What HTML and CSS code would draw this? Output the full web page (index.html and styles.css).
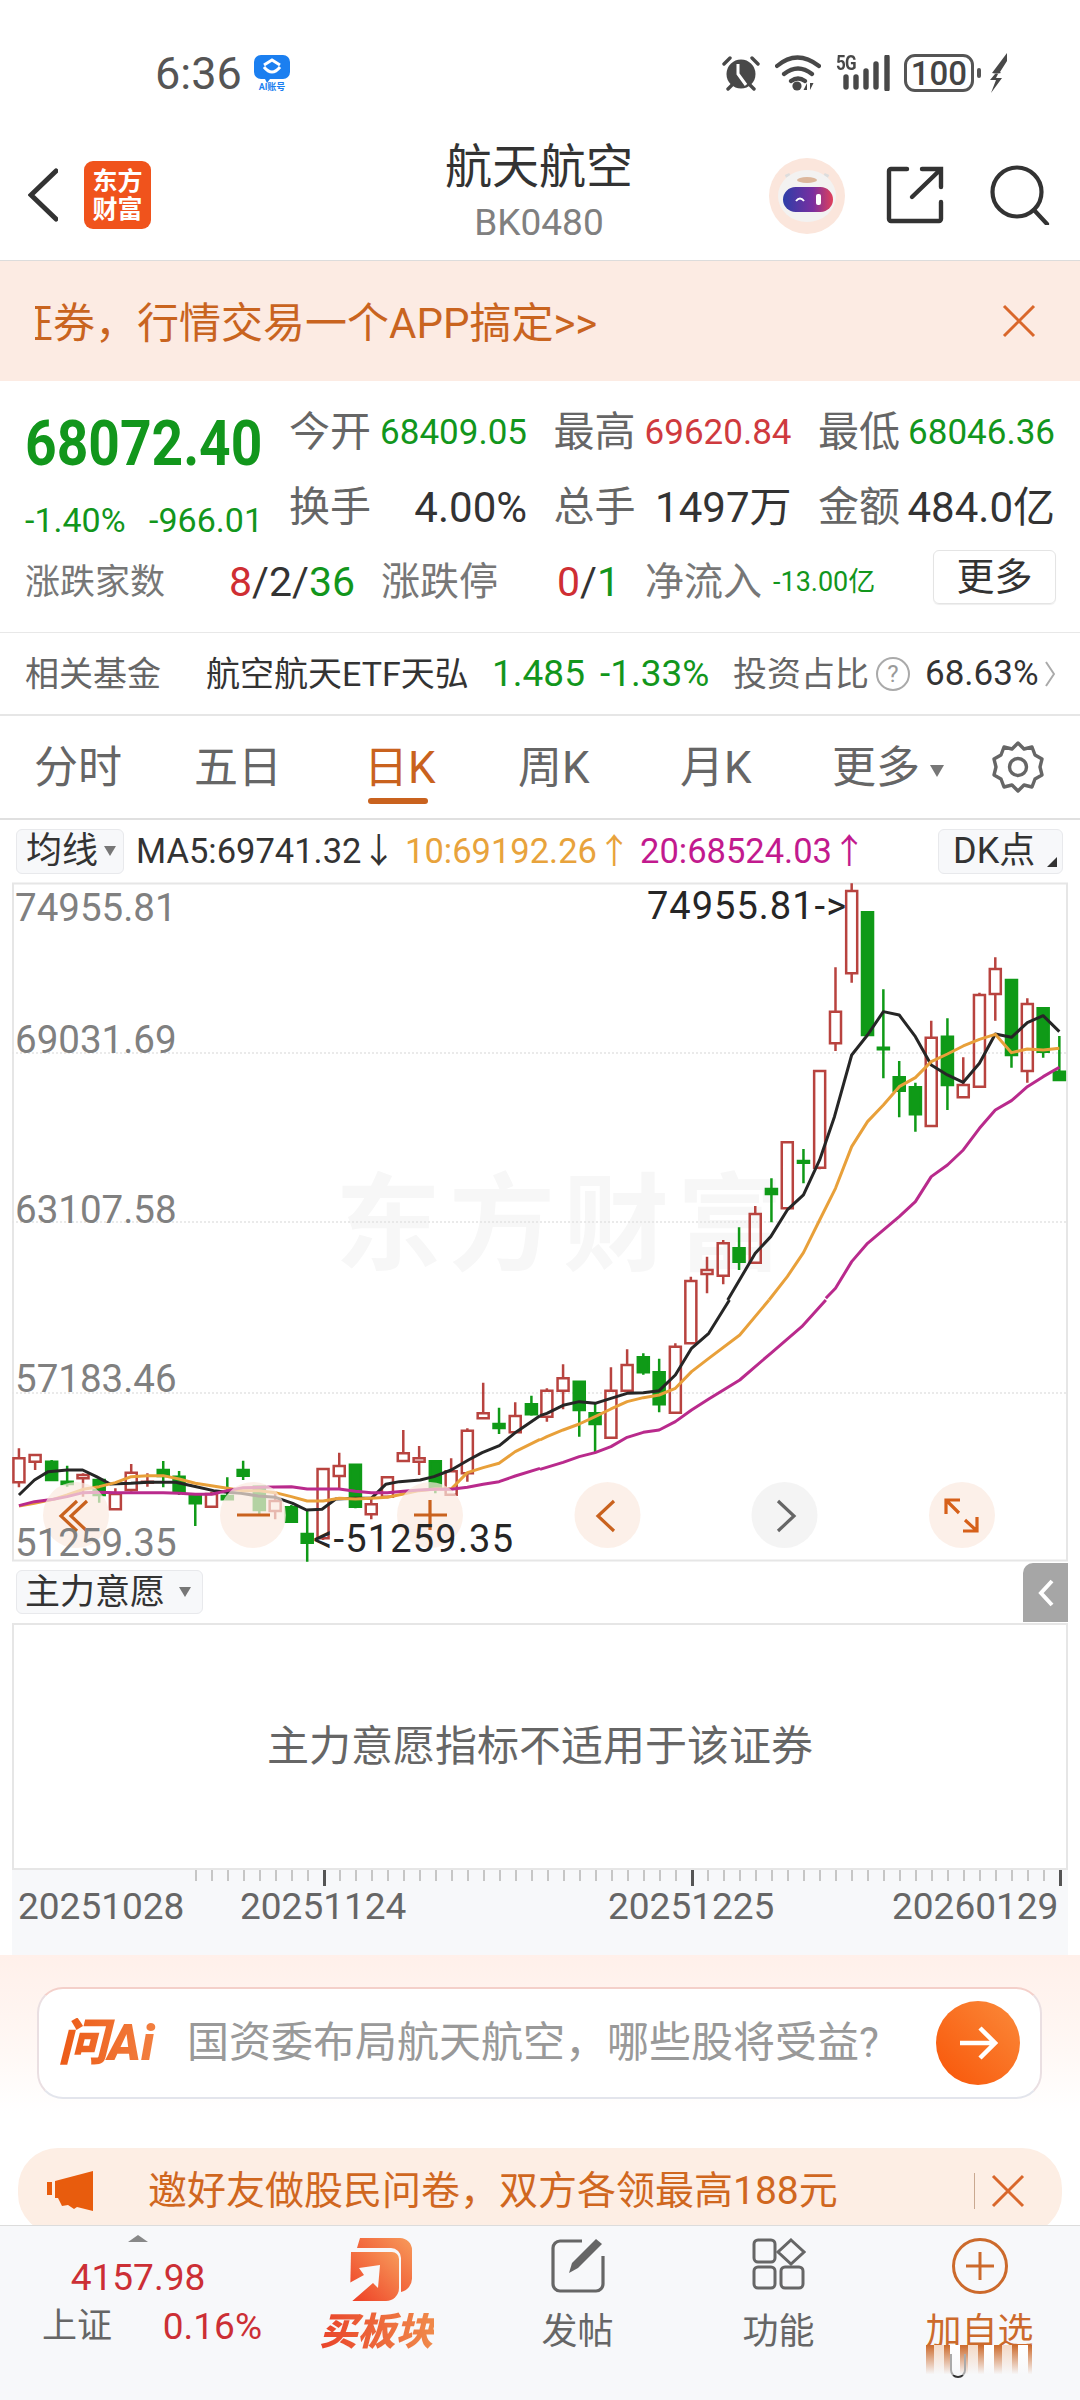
FILE: index.html
```html
<!DOCTYPE html>
<html lang="zh">
<head>
<meta charset="utf-8">
<title>航天航空</title>
<link rel="stylesheet" href="styles.css">
</head>
<body>
<div class="page">
  <header class="status">
    <span class="clock">6:36</span>
    <span class="app-badge">
      <svg width="36" height="28" viewBox="0 0 36 28"><path d="M7 0H29a7 7 0 0 1 7 7V17a7 7 0 0 1-7 7H16l-3 4-2-4H7a7 7 0 0 1-7-7V7a7 7 0 0 1 7-7z" fill="#1b7ff0"/><path d="M10 10l8-5 8 5" fill="none" stroke="#fff" stroke-width="3"/><path d="M10 12q8 10 16 0" fill="none" stroke="#fff" stroke-width="3"/></svg>
      <span class="app-badge-text">AI账号</span>
    </span>
    <span class="status-icons">
      <svg class="ic-alarm" width="38" height="36" viewBox="0 0 38 36"><circle cx="19" cy="19" r="14.5" fill="#484848"/><path d="M2 9l6-6M36 9l-6-6M6 34l4-4M32 34l-4-4" stroke="#484848" stroke-width="3.4" stroke-linecap="round"/><path d="M16 9v10l8 11" stroke="#fff" stroke-width="3" fill="none"/></svg>
      <svg class="ic-wifi" width="46" height="36" viewBox="0 0 46 36"><path d="M2 11q20-17 42 0M9 19q14-11 28 0M16 26q7-5 14 0" fill="none" stroke="#484848" stroke-width="4.2" stroke-linecap="round"/><circle cx="22" cy="31" r="4.6" fill="#484848"/><path d="M32 35v-7l-3.500 7zM35 28v7l3.500-7z" fill="#484848"/></svg>
      <span class="ic-signal">
        <span class="five-g">5G</span>
        <svg width="48" height="36" viewBox="0 0 48 36"><path d="M3 22v10M13 22v10M23 16v16M33 9v23M44 2v32" stroke="#484848" stroke-width="5.400" stroke-linecap="round"/></svg>
      </span>
      <span class="battery">100</span>
      <span class="battery-tip"></span>
      <svg class="ic-bolt" width="18" height="40" viewBox="0 0 18 40"><path d="M17 0L2 20l6 1-2 4 6 0L1 40 6 27l-6 0 5-6 6-1-1-1 7-11z" fill="#484848"/></svg>
    </span>
  </header>

  <nav class="nav">
    <div class="nav-left">
      <svg width="30" height="54" viewBox="0 0 30 54"><path d="M28 3L3 27l25 24" fill="none" stroke="#333" stroke-width="5" stroke-linecap="round"/></svg>
      <div class="logo"><span>东方</span><span>财富</span></div>
    </div>
    <div class="nav-title">
      <div class="title">航天航空</div>
      <div class="code">BK0480</div>
    </div>
    <div class="nav-right">
      <svg class="avatar" width="76" height="76" viewBox="0 0 76 76"><defs><linearGradient id="visor" x1="0" x2="1"><stop offset="0" stop-color="#2c3ea8"/><stop offset=".6" stop-color="#7a2fa0"/><stop offset="1" stop-color="#e0405a"/></linearGradient></defs><circle cx="38" cy="38" r="38" fill="#fbe6dc"/><path d="M18 16l4 8M58 16l-4 8" stroke="#ddd" stroke-width="5"/><ellipse cx="38" cy="38" rx="29" ry="26" fill="#f3f2f1"/><ellipse cx="38" cy="22" rx="10" ry="3" fill="#dcb79c"/><rect x="14" y="29" width="50" height="25" rx="12.500" fill="url(#visor)"/><path d="M27 43q4-5 8 0" stroke="#fff" stroke-width="2" fill="none"/><rect x="47" y="36" width="5" height="11" rx="2" fill="#fff"/></svg>
      <svg class="ic-share" width="58" height="58" viewBox="0 0 58 58"><path d="M21 3H5a2 2 0 0 0-2 2V53a2 2 0 0 0 2 2H53a2 2 0 0 0 2-2V36M36 3H55V21M54 4L26 31" fill="none" stroke="#333" stroke-width="4.400" stroke-linecap="round"/></svg>
      <svg class="ic-search" width="60" height="60" viewBox="0 0 60 60"><circle cx="27" cy="27" r="24.500" fill="none" stroke="#333" stroke-width="4.200"/><path d="M44 45l13 14" stroke="#333" stroke-width="4.200" stroke-linecap="round"/></svg>
    </div>
  </nav>

  <section class="promo">
    <div class="promo-clip"><span class="promo-text">证券，行情交易一个APP搞定&gt;&gt;</span></div>
    <svg width="34" height="34" viewBox="0 0 34 34"><path d="M2 2l30 30M32 2L2 32" stroke="#d9672b" stroke-width="3"/></svg>
  </section>

  <section class="stats">
    <div class="stats-top">
      <div class="quote">
        <div class="price">68072.40</div>
        <div class="chg"><span>-1.40%</span><span>-966.01</span></div>
      </div>
      <div class="stat-grid">
        <div class="stat"><span class="lbl">今开</span><span class="val up-g">68409.05</span></div>
        <div class="stat"><span class="lbl">最高</span><span class="val up-r">69620.84</span></div>
        <div class="stat"><span class="lbl">最低</span><span class="val up-g">68046.36</span></div>
        <div class="stat"><span class="lbl">换手</span><span class="val2">4.00%</span></div>
        <div class="stat"><span class="lbl">总手</span><span class="val2">1497万</span></div>
        <div class="stat"><span class="lbl">金额</span><span class="val2">484.0亿</span></div>
      </div>
    </div>
    <div class="stats-row3">
      <span class="lbl3 lbl3-sm">涨跌家数</span>
      <span class="mix"><span class="red">8</span>/2/<span class="green">36</span></span>
      <span class="lbl3">涨跌停</span>
      <span class="mix"><span class="red">0</span>/<span class="green">1</span></span>
      <span class="lbl3">净流入</span>
      <span class="inflow">-13.00亿</span>
      <span class="more-btn">更多</span>
    </div>
  </section>

  <section class="fund">
    <span class="fund-lbl">相关基金</span>
    <span class="fund-name">航空航天ETF天弘</span>
    <span class="fund-num">1.485</span>
    <span class="fund-num">-1.33%</span>
    <span class="fund-lbl">投资占比</span>
    <span class="help">?</span>
    <span class="fund-pct">68.63%</span>
    <svg width="10" height="28" viewBox="0 0 10 28"><path d="M1 2l8 12-8 12" fill="none" stroke="#aaa" stroke-width="2"/></svg>
  </section>

  <section class="tabs">
    <span class="tab">分时</span>
    <span class="tab">五日</span>
    <span class="tab tab-active">日K</span>
    <span class="tab">周K</span>
    <span class="tab">月K</span>
    <span class="tab">更多<i class="caret"></i></span>
    <svg width="52" height="54" viewBox="0 0 52 54"><path d="M26 3l6 6 8-2 3 8 7 4-2 8 2 8-7 4-3 8-8-2-6 6-6-6-8 2-3-8-7-4 2-8-2-8 7-4 3-8 8 2z" fill="none" stroke="#666" stroke-width="3.400" stroke-linejoin="round"/><circle cx="26" cy="27" r="8.500" fill="none" stroke="#666" stroke-width="3.400"/></svg>
  </section>

  <section class="legend">
    <span class="pill pill-ma">均线<i class="caret caret-sm"></i></span>
    <span class="ma ma5">MA5:69741.32↓</span>
    <span class="ma ma10">10:69192.26↑</span>
    <span class="ma ma20">20:68524.03↑</span>
    <span class="pill pill-dk">DK点<i class="corner"></i></span>
  </section>

  <section class="chart">
    <svg class="chart-svg" width="1080" height="679" viewBox="0 882 1080 679">
      <rect x="13" y="883.500" width="1054" height="677" fill="#fff" stroke="#e6e6e6" stroke-width="2"/>
      <text class="watermark" x="335" y="1262">东方财富</text>
      <path d="M12 1053H1068M12 1222H1068M12 1393H1068" stroke="#e4e4e4" stroke-width="1.500" stroke-dasharray="2 2"/>

      <g transform="translate(0 1300) scale(.3444 .3333)">
        <path class="c-red" d="M55 445V475M39 475h32v72h-32zM55 547V562M102 463V465M86 465h32v20h-32zM102 485V510M241 520V525M225 525h32v10h-32zM241 535V590M335 565V582M319 582h32v46h-32zM381 492V518M365 518h32v52h-32zM381 570V575M428 520V545M412 545h32v3h-32zM428 548V560M614 575V582M598 582h32v38h-32zM799 580V603M783 603h32v30h-32zM799 633V658M938 505V507M922 507h32v208h-32zM938 715V720M985 458V498M969 498h32v30h-32zM985 528V565M1078 598V613M1062 613h32v30h-32zM1078 643V658M1125 530V532M1109 532h32v58h-32zM1125 590V595M1171 390V460M1155 460h32v23h-32zM1217 438V475M1201 475h32v10h-32zM1217 485V525M1310 475V514M1294 514h32v70h-32zM1357 385V392M1341 392h32v128h-32zM1357 520V545M1403 248V340M1387 340h32v15h-32zM1496 307V348M1480 348h32v49h-32z"/>
        <path class="c-green" d="M150 480V485M134 485h32v55h-32zM195 497V545M179 545h32v7h-32zM195 552V560M272 540h32v45h-32zM288 585V608M474 483V510M458 510h32v18h-32zM474 528V562M520 513V530M504 530h32v45h-32zM520 575V585M567 585V588M551 588h32v22h-32zM567 610V678M660 532V588M644 588h32v10h-32zM660 598V600M706 482V510M690 510h32v17h-32zM706 527V540M753 558V560M737 560h32v70h-32zM753 630V645M846 615V622M830 622h32v43h-32zM846 665V667M892 630V702M876 702h32v26h-32zM892 728V785M1032 492V494M1016 494h32v126h-32zM1032 620V625M1264 482V484M1248 484h32v81h-32zM1264 565V580M1449 323V372M1433 372h32v12h-32zM1449 384V402M1543 287V313M1527 313h32v30h-32zM1543 343V347"/>
      </g>
      <g transform="translate(540 1300) scale(.3444 .3333)">
        <path class="c-red" d="M20 265V272M4 272h32v78h-32zM20 350V365M67 193V235M51 235h32v37h-32zM67 272V328M206 202V272M190 272h32v141h-32zM253 148V195M237 195h32v77h-32zM393 130V140M377 140h32v198h-32z"/>
        <path class="c-green" d="M114 243V245M98 245h32v85h-32zM114 330V410M160 310V340M144 340h32v32h-32zM160 372V458M300 160V172M284 172h32v45h-32zM300 217V224M346 176V217M330 217h32v96h-32zM346 313V337"/>
      </g>
      <g transform="translate(540 880) scale(.3444 .3333)">
        <path class="c-red" d="M438 1190V1203M422 1203h32v187h-32zM485 1130V1170M469 1170h32v12h-32zM485 1182V1240M532 1080V1090M516 1090h32v97h-32zM532 1187V1213M625 978V1002M609 1002h32v146h-32zM702 787h32v198h-32zM796 573h32v290h-32zM812 863V868M858 262V395M842 395h32v95h-32zM858 490V513M905 10V33M889 33h32v247h-32zM905 280V308M1136 422V473M1120 473h32v265h-32zM1229 532V615M1213 615h32v37h-32zM1276 338V345M1260 345h32v275h-32zM1322 232V267M1306 267h32v75h-32zM1322 342V422M1415 355V372M1399 372h32v201h-32zM1415 573V608"/>
        <path class="c-green" d="M578 1042V1105M562 1105h32v40h-32zM578 1145V1170M672 895V927M656 927h32v15h-32zM672 942V1027M765 807V843M749 843h32v5h-32zM765 848V910M935 97h32v368h-32zM997 328V503M981 503h32v5h-32zM997 508V595M1043 543V592M1027 592h32v40h-32zM1043 632V712M1090 608V622M1074 622h32v81h-32zM1090 703V755M1183 415V470M1167 470h32v145h-32zM1183 615V690M1353 300h32v225h-32zM1369 525V563M1461 382V385M1445 385h32v130h-32zM1461 515V533M1508 468V575M1492 575h32v25h-32z"/>
      </g>

      <g transform="translate(0 1300) scale(.3444 .3333)">
        <polyline class="ma-line ma-black" points="55,585 100,540 140,515 195,510 240,510 280,530 320,552 380,550 430,547 510,547 560,558 620,572 660,577 700,580 750,588 800,592 850,610 890,630 935,628 975,597 1030,595 1078,595 1120,553 1160,545 1220,540 1260,530 1310,510 1360,480 1400,458 1450,437 1500,395 1568,347"/>
        <polyline class="ma-line ma-orange" points="55,618 100,610 155,598 195,585 241,568 288,560 335,548 381,530 428,527 474,527 520,537 567,550 614,557 660,565 706,572 753,572 799,578 846,590 892,603 938,603 985,595 1032,597 1078,595 1125,592 1171,582 1217,572 1264,567 1310,567 1357,518 1403,503 1449,490 1496,455 1568,418"/>
        <polyline class="ma-line ma-magenta" points="55,617 100,605 155,598 195,590 241,578 288,577 335,578 381,578 428,578 474,578 520,580 567,583 614,583 660,572 706,563 753,562 799,561 846,560 892,567 938,567 985,567 1032,574 1078,578 1125,578 1171,574 1217,570 1264,568 1310,568 1357,562 1403,553 1449,545 1496,528 1568,505"/>
      </g>
      <g transform="translate(540 1300) scale(.3444 .3333)">
        <polyline class="ma-line ma-black" points="0,347 20,340 67,316 114,305 160,310 206,295 253,280 300,278 346,272 393,225 440,145 490,100 550,0"/>
        <polyline class="ma-line ma-orange" points="0,420 20,410 67,390 114,372 160,350 206,327 253,305 300,293 346,285 393,265 440,215 490,175 580,105 665,0"/>
        <polyline class="ma-line ma-magenta" points="0,508 67,487 114,470 160,458 206,440 253,412 300,397 346,390 393,365 440,330 490,297 580,240 670,160 760,80 830,0"/>
      </g>
      <g transform="translate(540 880) scale(.3444 .3333)">
        <polyline class="ma-line ma-black" points="545,1260 625,1120 670,1070 718,990 765,945 812,840 855,710 905,525 951,465 997,395 1043,405 1090,470 1136,555 1183,585 1229,607 1276,550 1322,462 1369,472 1415,428 1461,407 1508,455"/>
        <polyline class="ma-line ma-orange" points="665,1260 718,1190 765,1118 812,1020 858,925 905,800 951,725 997,675 1043,620 1090,593 1136,545 1183,522 1229,498 1276,478 1322,463 1369,518 1415,507 1461,510 1508,505"/>
        <polyline class="ma-line ma-magenta" points="830,1255 858,1225 905,1145 951,1090 1043,1010 1090,965 1136,890 1183,855 1229,810 1276,745 1322,690 1369,662 1415,620 1461,590 1508,562"/>
      </g>

      <circle class="btn-o" cx="76" cy="1515" r="33"/>
      <circle class="btn-o" cx="253" cy="1515" r="33"/>
      <circle class="btn-o" cx="430" cy="1515" r="33"/>
      <circle class="btn-o" cx="607.500" cy="1515" r="33"/>
      <circle class="btn-g" cx="784.500" cy="1515" r="33"/>
      <circle class="btn-o" cx="962" cy="1515" r="33"/>
      <path class="btn-ic" d="M77 1501L61 1516 77 1531M87 1501L71 1516 87 1531M237 1515H270M414 1515H447M430 1500V1530M614 1501L598 1516 614 1531"/>
      <path class="btn-ic btn-ic-g" d="M778 1501L794 1516 778 1531"/>
      <path class="btn-ic btn-ic-d" d="M960 1500H946V1514M946 1500L959 1513M977 1517V1531H963M977 1531L965 1520"/>

      <text class="ylab" x="15" y="921">74955.81</text>
      <text class="ylab" x="15" y="1053">69031.69</text>
      <text class="ylab" x="15" y="1223">63107.58</text>
      <text class="ylab" x="15" y="1392">57183.46</text>
      <text class="ylab" x="15" y="1556">51259.35</text>
      <text class="extreme" x="647" y="919" textLength="199" lengthAdjust="spacing">74955.81-&gt;</text>
      <text class="extreme" x="313" y="1552" textLength="200" lengthAdjust="spacing">&lt;-51259.35</text>
    </svg>
  </section>

  <section class="sub">
    <span class="pill pill-main">主力意愿<i class="caret caret-sm"></i></span>
    <span class="collapse"><svg width="16" height="28" viewBox="0 0 16 28"><path d="M14 2L3 14l11 12" fill="none" stroke="#fff" stroke-width="4"/></svg></span>
  </section>
  <section class="notice">主力意愿指标不适用于该证券</section>

  <section class="axis">
    <div class="ticks"><i class="major m1"></i><i class="major m2"></i><i class="major m3"></i></div>
    <div class="dates"><span>20251028</span><span>20251124</span><span>20251225</span><span>20260129</span></div>
  </section>

  <section class="ask">
    <div class="ask-box">
      <span class="ask-logo">问Ai</span>
      <span class="ask-text">国资委布局航天航空，哪些股将受益?</span>
      <span class="ask-go"><svg width="40" height="36" viewBox="0 0 40 36"><path d="M2 18H36M22 3l15 15-15 15" fill="none" stroke="#fff" stroke-width="4.500"/></svg></span>
    </div>
  </section>

  <section class="ad">
    <div class="ad-pill">
      <svg width="46" height="40" viewBox="0 0 46 40"><path d="M0 11h5v13H0zM8 10L46 0V40L30 36l-3 2-6-4-6 1-4-8H8z" fill="#e85c0d"/></svg>
      <span class="ad-text">邀好友做股民问卷，双方各领最高188元</span>
      <span class="ad-div"></span>
      <svg width="36" height="36" viewBox="0 0 36 36"><path d="M3 3l30 30M33 3L3 33" stroke="#d9672b" stroke-width="3"/></svg>
    </div>
  </section>

  <footer class="bar">
    <div class="index">
      <i class="index-up"></i>
      <div class="index-val">4157.98</div>
      <div class="index-row"><span class="index-name">上证</span><span class="index-pct">0.16%</span></div>
    </div>
    <div class="bar-item">
      <span class="bar-ic"><svg width="70" height="65" viewBox="0 0 70 65"><defs><linearGradient id="bk" x1="0" y1="1" x2="1" y2="0"><stop offset="0" stop-color="#ee3d24"/><stop offset="1" stop-color="#f79b5b"/></linearGradient></defs><path d="M18 0H58a12 12 0 0 1 12 12V40a14 14 0 0 1-11 14V20a10 10 0 0 0-10-10H15z" fill="url(#bk)"/><path d="M9 14H50a7 7 0 0 1 7 7V50a13 13 0 0 1-13 13H8z" fill="url(#bk)"/><path d="M38 27L17 30 22 37 0 49 0 65 8 65 31 45 36 50z" fill="#f7f8fa"/></svg></span>
      <span class="bar-lbl bar-buy">买板块</span>
    </div>
    <div class="bar-item">
      <span class="bar-ic"><svg width="56" height="56" viewBox="0 0 56 56"><path d="M32 3H10a7 7 0 0 0-7 7V46a7 7 0 0 0 7 7H46a7 7 0 0 0 7-7V18" fill="none" stroke="#666" stroke-width="3.200"/><path d="M19 35l3-10L46 1l6 5-24 24z" fill="#666"/></svg></span>
      <span class="bar-lbl">发帖</span>
    </div>
    <div class="bar-item">
      <span class="bar-ic"><svg width="54" height="52" viewBox="0 0 54 52"><rect x="2" y="2" width="21" height="22" rx="4" fill="none" stroke="#666" stroke-width="3"/><path d="M39 2l13 12-13 12-13-12z" fill="none" stroke="#666" stroke-width="3"/><rect x="2" y="29" width="21" height="21" rx="4" fill="none" stroke="#666" stroke-width="3"/><rect x="29" y="29" width="22" height="21" rx="4" fill="none" stroke="#666" stroke-width="3"/></svg></span>
      <span class="bar-lbl">功能</span>
    </div>
    <div class="bar-item bar-add">
      <span class="bar-ic"><svg width="56" height="56" viewBox="0 0 56 56"><circle cx="28" cy="28" r="26.500" fill="none" stroke="#cc6a2c" stroke-width="3"/><path d="M14 28H42M28 14V42" stroke="#cc6a2c" stroke-width="3"/></svg></span>
      <span class="bar-lbl bar-orange">加自选</span>
      <i class="smear"></i><i class="home-u"></i>
    </div>
  </footer>
</div>
</body>
</html>
```
FILE: styles.css
```css
* { box-sizing: border-box; margin: 0; padding: 0; }
html, body { width: 1080px; height: 2400px; overflow: hidden; background: #fff; }
body { font-family: Roboto, "Noto Sans CJK SC", sans-serif; line-height: 1; color: #333; }
i { font-style: normal; display: inline-block; }
svg { display: block; flex: none; }
.page { width: 1080px; height: 2400px; display: flex; flex-direction: column; overflow: hidden; }
.red { color: #cf2e33; }
.green { color: #12961c; }
.up-g { color: #12961c; }
.up-r { color: #cf3a3e; }

/* status bar */
.status { height: 130px; padding: 16px 0 0 155px; display: flex; align-items: center; }
.clock { font-size: 45px; color: #555; width: 99px; }
.app-badge { width: 36px; display: flex; flex-direction: column; align-items: center; gap: 0; }
.app-badge-text { font-size: 9px; font-weight: 700; color: #1b7ff0; white-space: nowrap; }
.status-icons { margin-left: auto; padding-right: 72px; display: flex; align-items: center; }
.ic-alarm { margin-right: 15px; }
.ic-wifi { margin-right: 15px; }
.ic-signal { display: flex; width: 55px; height: 40px; position: relative; margin-right: 13px; }
.ic-signal svg { position: absolute; right: 0; top: 2px; }
.five-g { position: absolute; left: 0; top: 0; font-size: 20px; font-weight: 700; color: #484848; letter-spacing: -1px; transform: scaleX(.85); transform-origin: left; }
.battery { width: 70px; height: 38px; border: 3px solid #555; border-radius: 11px; font-size: 33px; font-weight: 500; color: #444; display: flex; align-items: center; justify-content: center; }
.battery-tip { width: 4px; height: 10px; background: #555; border-radius: 2px; margin: 0 9px 0 3px; }

/* nav */
.nav { height: 131px; padding: 0 30px 0 28px; display: grid; grid-template-columns: 1fr auto 1fr; align-items: center; border-bottom: 1px solid #dcdcdc; }
.nav-left { display: flex; align-items: center; gap: 26px; }
.logo { width: 67px; height: 68px; background: #f0531c; border-radius: 9px; display: flex; flex-direction: column; align-items: center; justify-content: center; gap: 3px; color: #fff; font-size: 25px; font-weight: 700; }
.nav-title { text-align: center; margin-top: -2px; }
.title { font-size: 47px; color: #333; margin-top: -4px; }
.code { font-size: 37px; color: #808080; margin-top: 14px; }
.nav-right { display: flex; justify-content: flex-end; align-items: center; }
.avatar { margin-right: 41px; margin-top: 2px; }
.ic-share { margin-right: 46px; }

/* promo */
.promo { height: 120px; background: #fcebe3; display: flex; align-items: center; padding: 0 44px 0 35px; justify-content: space-between; }
.promo-clip { width: 580px; overflow: hidden; padding-top: 6px; }
.promo-text { display: block; font-size: 42px; color: #c9641f; white-space: nowrap; margin-left: -24px; }

/* stats */
.stats { height: 252px; padding-top: 14px; border-bottom: 1px solid #e8e8e8; }
.stats-top { height: 150px; display: flex; padding-left: 25px; }
.quote { width: 264px; flex: none; }
.price { height: 98px; line-height: 98px; font-size: 63px; font-weight: 700; color: #12961c; white-space: nowrap; transform: scaleX(.875); transform-origin: left; }
.chg { height: 54px; display: flex; align-items: center; width: 238px; justify-content: space-between; font-size: 34px; color: #12961c; }
.stat-grid { display: grid; grid-template-columns: 238px 238px 237px; column-gap: 26.500px; grid-auto-rows: 75px; }
.stat { display: flex; align-items: center; justify-content: space-between; white-space: nowrap; }
.lbl { font-size: 41px; color: #666; }
.val { font-size: 35px; }
.val2 { font-size: 42px; color: #333; }
.stats-row3 { height: 74px; display: grid; grid-template-columns: 204px 152px 176px 88px 128px 160px 123px; padding-left: 25px; align-items: center; white-space: nowrap; }
.lbl3 { font-size: 39px; color: #777; }
.lbl3-sm { font-size: 35px; }
.mix { font-size: 41px; color: #333; }
.inflow { font-size: 27px; color: #12961c; }
.more-btn { height: 54px; margin-top: -10px; border: 1px solid #e4e4e4; border-radius: 6px; font-size: 38px; color: #333; display: flex; align-items: center; justify-content: center; box-shadow: 0 1px 1px #eee; }

/* fund */
.fund { height: 83px; border-bottom: 2px solid #e6e6e6; display: grid; grid-template-columns: 181px 286px 108px 133px 145px 47px 120px 10px; padding-left: 25px; align-items: center; white-space: nowrap; }
.fund-lbl { font-size: 34px; color: #666; }
.fund-name { font-size: 34px; color: #333; }
.fund-num { font-size: 37px; color: #12961c; }
.help { width: 34px; height: 34px; margin-left: -2px; border: 2px solid #aaa; border-radius: 50%; font-size: 24px; color: #999; display: flex; align-items: center; justify-content: center; }
.fund-pct { font-size: 35px; color: #333; }

/* tabs */
.tabs { height: 104px; border-bottom: 2px solid #e0e0e0; display: grid; grid-template-columns: 160px 170px 154px 162px 152px 159px 52px; padding-left: 34px; align-items: center; }
.tabs svg { margin-left: 1px; }
.tab { font-size: 44px; color: #666; position: relative; white-space: nowrap; padding-top: 2px; }
.tab-active { color: #c9621e; }
.tab-active::after { content: ""; position: absolute; left: 4px; top: 54px; width: 60px; height: 6px; border-radius: 3px; background: #c9621e; }
.caret { width: 0; height: 0; border-left: 7px solid transparent; border-right: 7px solid transparent; border-top: 12px solid #777; margin-left: 10px; vertical-align: 6px; }
.caret-sm { border-left-width: 6px; border-right-width: 6px; border-top-width: 10px; margin-left: 6px; vertical-align: 5px; }

/* legend */
.legend { height: 62px; display: flex; align-items: center; padding: 0 17px 0 16px; white-space: nowrap; }
.pill { height: 45px; background: #f7f8fa; border: 1px solid #e8e9ec; border-radius: 6px; font-size: 36px; color: #333; display: inline-flex; align-items: center; }
.pill-ma { width: 108px; padding-left: 9px; }
.pill-dk { width: 125px; padding-left: 14px; margin-left: auto; position: relative; }
.corner { position: absolute; right: 5px; bottom: 6px; border-left: 10px solid transparent; border-bottom: 10px solid #333; }
.ma { font-size: 34.500px; }
.ma5 { margin-left: 12px; width: 269px; color: #333; }
.ma10 { width: 235px; color: #e8a33c; }
.ma20 { color: #c21a8e; }

/* chart */
.chart { height: 679px; }
.chart-svg { width: 1080px; height: 679px; overflow: visible; }
.watermark { font-size: 106px; font-weight: 700; fill: #f7f7f7; letter-spacing: 8px; font-family: "Noto Sans CJK SC", sans-serif; }
.c-red { fill: none; stroke: #b8433f; stroke-width: 2.500px; vector-effect: non-scaling-stroke; }
.c-green { fill: #0f9a17; stroke: #0f9a17; stroke-width: 2.500px; vector-effect: non-scaling-stroke; }
.ma-line { fill: none; stroke-width: 3px; stroke-linejoin: round; vector-effect: non-scaling-stroke; }
.ma-black { stroke: #262626; }
.ma-orange { stroke: #e8a03a; }
.ma-magenta { stroke: #b92a8c; }
.btn-o { fill: #fbe9df; fill-opacity: .7; }
.btn-g { fill: #f3f3f3; fill-opacity: .95; }
.btn-ic { fill: none; stroke: #c9621e; stroke-width: 3.200px; }
.btn-ic-g { stroke: #666; }
.btn-ic-d { stroke: #d6601a; }
.ylab { font-size: 38.500px; fill: #808080; }
.extreme { font-size: 38px; fill: #262626; }

/* sub panel */
.sub { height: 62px; display: flex; align-items: center; justify-content: space-between; padding: 0 12px 0 16px; }
.pill-main { width: 187px; height: 44px; padding-left: 8px; font-size: 35px; }
.pill-main .caret { margin-left: 14px; }
.collapse { width: 45px; height: 59px; background: #a6a6a6; border-radius: 10px 0 0 0; display: flex; align-items: center; justify-content: center; align-self: flex-end; margin-bottom: 1px; }
.notice { height: 247px; margin: 0 12px; border: 2px solid #e6e6e6; display: flex; align-items: center; justify-content: center; font-size: 42px; color: #666; }

/* axis */
.axis { height: 85px; margin: 0 12px; background: #f7f8fa; }
.ticks { height: 14px; margin-left: 183px; position: relative; background: repeating-linear-gradient(90deg, #c6c6c6 0 2px, transparent 2px 16px) 0 0 / 100% 11px no-repeat; }
.major { position: absolute; top: 0; width: 3px; height: 16px; background: #555; }
.m1 { left: 128px; }
.m2 { left: 496px; }
.m3 { left: 864px; }
.dates { height: 44px; display: grid; grid-template-columns: 222px 368px 284px 168px; padding-left: 6px; align-items: center; font-size: 37px; color: #666; }

/* ask */
.ask { height: 193px; padding: 32px 38px 0 37px; background: linear-gradient(#fff0ea, #fff8f5 50%, #fff 82%); }
.ask-box { height: 112px; border: 2px solid; border-color: #f4d0ca #eadfe2 #e3e5ec; border-radius: 26px; background: #fff; display: flex; align-items: center; padding: 0 20px 0 19px; }
.ask-logo { width: 129px; flex: none; font-size: 50px; font-weight: 900; font-style: italic; background: linear-gradient(90deg, #ec5a16, #f48b4e); -webkit-background-clip: text; background-clip: text; -webkit-text-fill-color: transparent; }
.ask-text { font-size: 42px; color: #999; white-space: nowrap; }
.ask-go { margin-left: auto; width: 84px; height: 84px; border-radius: 50%; background: linear-gradient(45deg, #f85508, #fb8a3a); display: flex; align-items: center; justify-content: center; }

/* ad */
.ad { height: 77px; overflow: hidden; padding: 0 18px; }
.ad-pill { height: 86px; background: #fdeee4; border-radius: 40px; display: flex; align-items: center; padding: 0 36px 0 29px; }
.ad-text { margin-left: 55px; font-size: 39px; color: #d0671f; white-space: nowrap; }
.ad-div { width: 1px; height: 36px; background: #c9a890; margin-left: auto; margin-right: 15px; }

/* bottom bar */
.bar { flex: 1; background: #f7f8fa; border-top: 1px solid #dcdcdc; display: grid; grid-template-columns: 276px repeat(4, 201px); }
.index { position: relative; padding: 33px 14px 0 42px; }
.index-up { position: absolute; left: 128px; top: 9px; border-left: 10px solid transparent; border-right: 10px solid transparent; border-bottom: 7px solid #888; }
.index-val { font-size: 37px; color: #cc2f35; text-align: center; width: 192px; }
.index-row { display: flex; justify-content: space-between; align-items: center; margin-top: 12px; }
.index-name { font-size: 35px; color: #666; }
.index-pct { font-size: 37px; color: #cc2f35; }
.bar-item { display: flex; flex-direction: column; align-items: center; padding-top: 12px; position: relative; }
.bar-ic { height: 73px; }
.bar-lbl { font-size: 36px; line-height: 42px; color: #666; }
.bar-buy { font-size: 38px; font-weight: 900; font-style: italic; background: linear-gradient(90deg, #e9432a, #f08a4a); -webkit-background-clip: text; background-clip: text; -webkit-text-fill-color: transparent; }
.bar-orange { color: #cc6a2c; }
.smear { position: absolute; left: 47px; top: 119px; width: 106px; height: 31px; background: linear-gradient(rgba(247, 248, 250, 0), #f7f8fa 95%), repeating-linear-gradient(90deg, #cc6a2c 0 8px, #f3d9c6 8px 18px, #cc6a2c 18px 24px, #fff 24px 34px); }
.home-u { position: absolute; left: 71px; top: 128px; width: 16px; height: 24px; border: 2px solid #333; border-top: 0; border-radius: 0 0 8px 8px; border-left-color: #aaa; border-right-color: #aaa; }
```
